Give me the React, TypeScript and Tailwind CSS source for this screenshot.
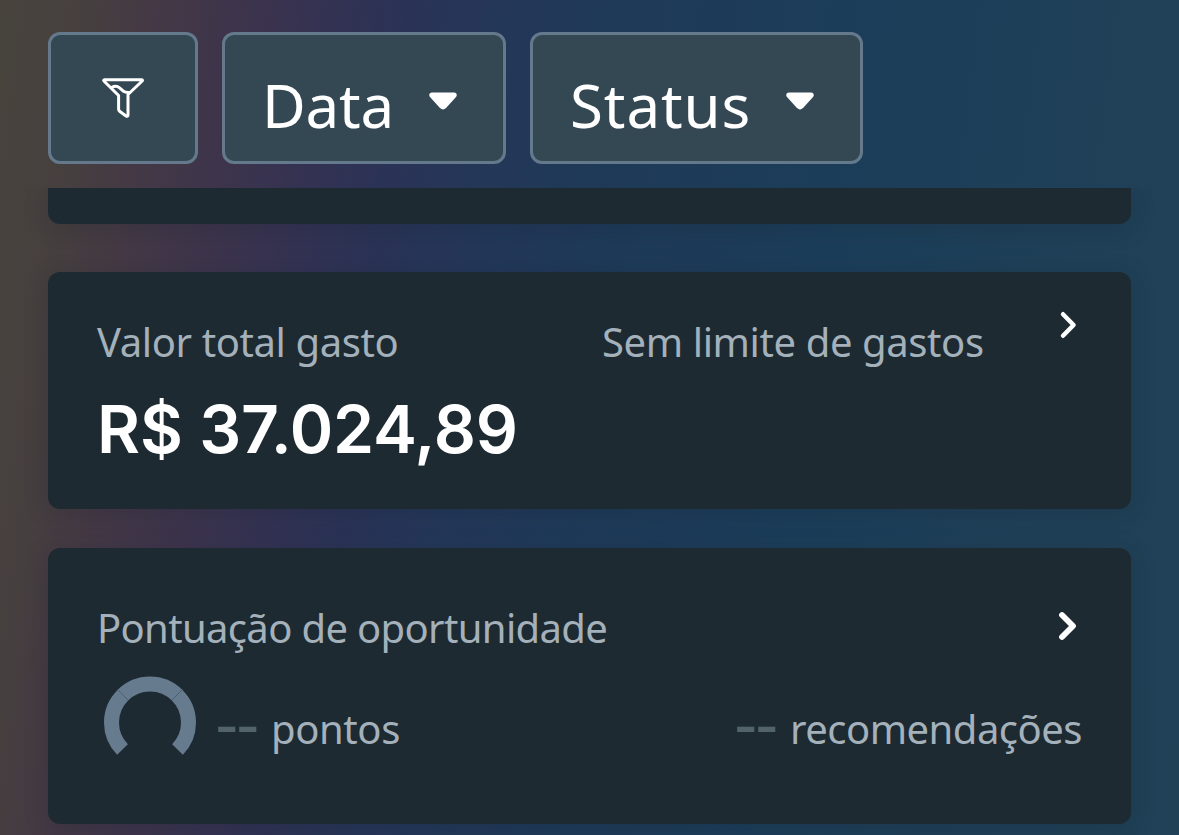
interface IconProps {
  className?: string;
}

function FunnelIcon({ className }: IconProps) {
  return (
    <svg viewBox="0 0 44 44" className={className} fill="none" stroke="currentColor" strokeWidth="3" strokeLinejoin="round" strokeLinecap="round">
      <path d="M3.6 3.7H40.6Q42 4 41.2 5L27 18.5V39Q26.8 41 25 40L18.6 35.2Q17.6 34.5 17.6 33V19.5L2.9 5Q2.2 4 3.6 3.7Z" />
      <path d="M10.5 11.5C17 8 19.5 13 22.5 15.2C24.5 16.6 26 16.4 28.5 16.6" />
    </svg>
  );
}

function CaretIcon({ className }: IconProps) {
  return (
    <svg viewBox="0 0 28 18" className={className} fill="currentColor">
      <path d="M3 0.5H25C27.8 0.5 28.6 3.4 26.8 5.3L17.5 15.6C15.5 18 12.5 18 10.5 15.6L1.2 5.3C-0.6 3.4 0.2 0.5 3 0.5Z" />
    </svg>
  );
}

function ChevronIcon({ bold }: { bold?: boolean }) {
  return (
    <svg viewBox="0 0 20 30" className="w-5 h-[30px] text-white" fill="none" stroke="currentColor" strokeWidth={bold ? 5.8 : 4.4} strokeLinecap="round" strokeLinejoin="round">
      <path d={bold ? 'M4 4L15 15L4 26' : 'M4 4.2L14.6 15L4 25.8'} />
    </svg>
  );
}

function ScoreGauge() {
  return (
    <svg viewBox="0 0 92 80" className="w-[92px] h-20">
      <path d="M18.5 73.5A38.5 38.5 0 1 1 73.5 73.5" fill="none" stroke="#677b8e" strokeWidth="15" />
      <path d="M13.5 13.5L24.1 24.1M78.5 13.5L67.9 24.1" stroke="#4d6072" strokeWidth="1" />
    </svg>
  );
}

// Placeholder shown while a metric has no value
function EmptyValue() {
  return (
    <span className="w-14 -mt-px -ml-[3px] font-['DejaVu_Sans'] text-[65px] leading-[54px] tracking-[-2.5px] text-[#53636a]">--</span>
  );
}

const filters = [
  { label: 'Data', width: 'w-[284px]', tracking: 'tracking-[-0.2px]' },
  { label: 'Status', width: 'w-[333px]', tracking: 'tracking-[0.9px]' },
];

export default function App() {
  return (
    <div className="w-full h-[835px] overflow-hidden flex flex-col font-['Noto_Sans',sans-serif] bg-[linear-gradient(97deg,#48443d_0%,#463f3f_7%,#443945_12%,#3d344c_19%,#333253_26%,#2a3356_32%,#243759_39%,#1e3a58_50%,#1c3d59_66%,#1f4058_85%,#204156_100%)]">
      {/* Filter bar */}
      <header className="h-[188px] shrink-0 px-12 pt-8 flex items-start gap-6">
        <button className="w-[150px] h-[132px] rounded-xl border-3 border-[#647a8c] bg-[#344854] flex items-center justify-center text-white">
          <FunnelIcon className="w-11 h-11" />
        </button>
        {filters.map((filter) => (
          <button
            key={filter.label}
            className={`${filter.width} h-[132px] rounded-xl border-3 border-[#647a8c] bg-[#344854] flex items-center justify-between pl-[37px] pr-[46px] text-white`}
          >
            <span className={`${filter.tracking} text-[60px] leading-none pt-[13px]`}>{filter.label}</span>
            <CaretIcon className="w-7 h-[18px] mt-[5px]" />
          </button>
        ))}
      </header>

      <main className="flex-1 min-h-0 overflow-hidden px-12 tracking-[-0.4px]">
        {/* Card scrolled under the filter bar */}
        <section className="h-9 rounded-b-xl bg-[#1d2a32] shadow-[0_4px_24px_rgba(20,30,40,0.2)]" />

        {/* Total spend */}
        <section className="mt-12 h-[237px] rounded-xl bg-[#1d2a32] pl-[49px] pr-[52px] pt-[38px] shadow-[0_4px_24px_rgba(20,30,40,0.2)]">
          <div className="flex items-start text-[40px] text-[#a4b1bb]">
            <span className="w-[505px] pt-0.5 leading-[60px]">Valor total gasto</span>
            <span className="flex-1 pt-0.5 leading-[60px]">Sem limite de gastos</span>
            <ChevronIcon />
          </div>
          <p className="mt-3 font-['Inter',sans-serif] text-[66px] leading-[90px] font-semibold tracking-[-0.15px] text-white">R$ 37.024,89</p>
        </section>

        {/* Opportunity score */}
        <section className="mt-[39px] h-[276px] rounded-xl bg-[#1d2a32] pl-[49px] pr-12 pt-12 shadow-[0_4px_24px_rgba(20,30,40,0.2)]">
          <div className="flex items-center justify-between pr-[5px] text-[40px] leading-[60px] text-[#a4b1bb]">
            <span className="h-[60px] pt-0.5 tracking-[-0.65px]">Pontuação de oportunidade</span>
            <ChevronIcon bold />
          </div>
          <div className="mt-5 pl-[7px] flex items-start text-[40px] leading-[60px] text-[#a4b1bb]">
            <ScoreGauge />
            <div className="flex-1 pl-[22px] pr-px pt-[23px] flex justify-between">
              <span className="flex"><EmptyValue />pontos</span>
              <span className="flex tracking-[-0.5px]"><EmptyValue />recomendações</span>
            </div>
          </div>
        </section>
      </main>
    </div>
  );
}
